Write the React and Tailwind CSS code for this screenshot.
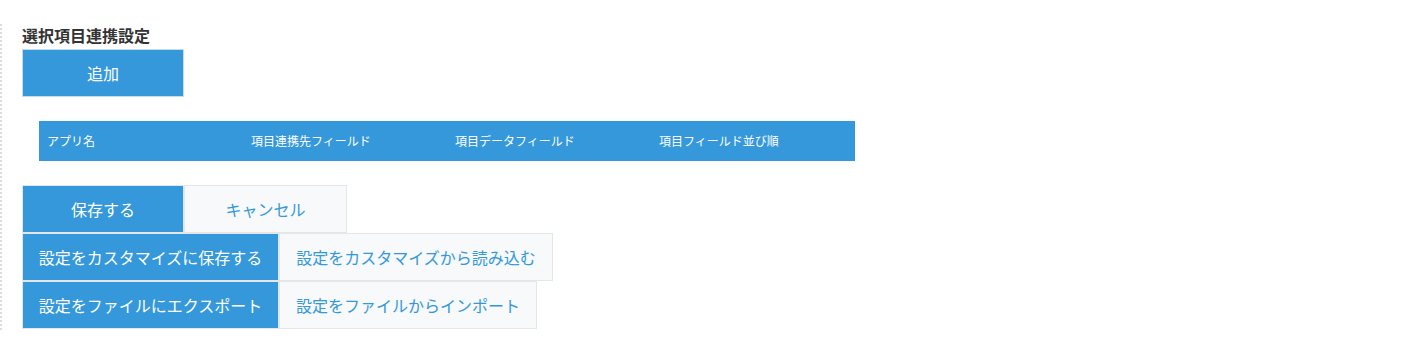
export default function App() {
  const font = { fontFamily: '"Noto Sans CJK JP", "Noto Sans", sans-serif' };
  const blueBtn =
    "h-[48px] flex items-center justify-center bg-[#3498db] text-white text-[16px] border border-[#e3e7e8] box-border";
  const grayBtn =
    "h-[48px] flex items-center justify-center bg-[#f7f9fa] text-[#3498db] text-[16px] border border-[#e3e7e8] box-border";
  return (
    <div className="w-[1428px] h-[353px] bg-white pt-[24px]" style={font}>
      <div className="border-l-2 border-dotted border-[#dcdcdc] pl-[20px] pb-[1px] w-fit">
        <div className="h-[25px] leading-[23px] text-[16px] font-bold text-[#333333]">
          選択項目連携設定
        </div>
        <button className="w-[162px] h-[48px] flex items-center justify-center bg-[#3498db] text-white text-[16px] border border-[#c5dcec]">
          追加
        </button>
        <div className="mt-[24px] ml-[17px] w-[816px] h-[40px] bg-[#3498db] flex items-center text-white text-[12px]">
          <div className="w-[204px] pl-[8px]">アプリ名</div>
          <div className="w-[204px] pl-[8px]">項目連携先フィールド</div>
          <div className="w-[204px] pl-[8px]">項目データフィールド</div>
          <div className="w-[204px] pl-[8px]">項目フィールド並び順</div>
        </div>
        <div className="mt-[24px] flex">
          <button className={`${blueBtn} w-[162px]`}>保存する</button>
          <button className={`${grayBtn} w-[163px]`}>キャンセル</button>
        </div>
        <div className="flex">
          <button className={`${blueBtn} w-[257px]`}>設定をカスタマイズに保存する</button>
          <button className={`${grayBtn} w-[274px]`}>設定をカスタマイズから読み込む</button>
        </div>
        <div className="flex">
          <button className={`${blueBtn} w-[257px]`}>設定をファイルにエクスポート</button>
          <button className={`${grayBtn} w-[258px]`}>設定をファイルからインポート</button>
        </div>
      </div>
    </div>
  );
}
